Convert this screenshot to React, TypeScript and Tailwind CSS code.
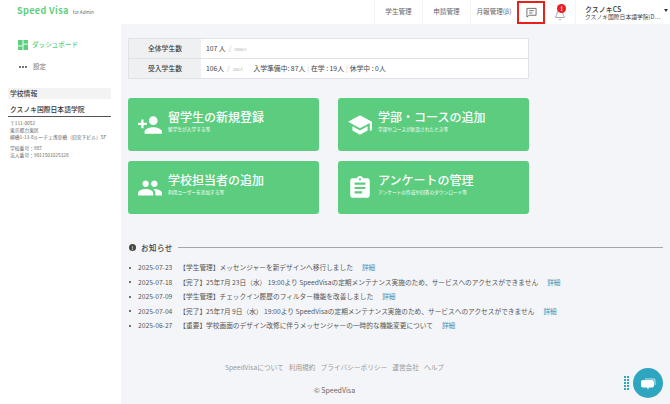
import { Bell } from 'lucide-react'

const cards = [
  { title: '留学生の新規登録', sub: '留学生が入学する等', path: 'M15 12c2.21 0 4-1.79 4-4s-1.79-4-4-4-4 1.79-4 4 1.79 4 4 4zm-9-2V7H4v3H1v2h3v3h2v-3h3v-2H6zm9 4c-2.67 0-8 1.34-8 4v2h16v-2c0-2.66-5.33-4-8-4z' },
  { title: '学部・コースの追加', sub: '学部やコースが新設されたとき等', path: 'M5 13.18v4L12 21l7-3.82v-4L12 17l-7-3.82zM12 3L1 9l11 6 9-4.91V17h2V9L12 3z' },
  { title: '学校担当者の追加', sub: '利用ユーザーを追加する等', path: 'M16 11c1.66 0 2.99-1.34 2.99-3S17.66 5 16 5c-1.66 0-3 1.34-3 3s1.34 3 3 3zm-8 0c1.66 0 2.99-1.34 2.99-3S9.66 5 8 5C6.34 5 5 6.34 5 8s1.34 3 3 3zm0 2c-2.33 0-7 1.17-7 3.5V19h14v-2.5c0-2.33-4.67-3.5-7-3.5zm8 0c-.29 0-.62.02-.97.05 1.16.84 1.97 1.97 1.97 3.45V19h6v-2.5c0-2.33-4.67-3.5-7-3.5z' },
  { title: 'アンケートの管理', sub: 'アンケートの作成や回答のダウンロード等', path: 'M19 3h-4.18C14.4 1.84 13.3 1 12 1c-1.3 0-2.4.84-2.82 2H5c-1.1 0-2 .9-2 2v14c0 1.1.9 2 2 2h14c1.1 0 2-.9 2-2V5c0-1.1-.9-2-2-2zm-7 0c.55 0 1 .45 1 1s-.45 1-1 1-1-.45-1-1 .45-1 1-1zm2 14H7v-2h7v2zm3-4H7v-2h10v2zm0-4H7V7h10v2z' },
]

const notices = [
  { date: '2025-07-23', text: '【学生管理】メッセンジャーを新デザインへ移行しました' },
  { date: '2025-07-18', text: '【完了】25年7月 23日（水） 19:00より SpeedVisaの定期メンテナンス実施のため、サービスへのアクセスができません' },
  { date: '2025-07-09', text: '【学生管理】チェックイン履歴のフィルター機能を改善しました' },
  { date: '2025-07-04', text: '【完了】25年7月 9日（水） 19:00より SpeedVisaの定期メンテナンス実施のため、サービスへのアクセスができません' },
  { date: '2025-06-27', text: '【重要】学校画面のデザイン改修に伴うメッセンジャーの一時的な機能変更について' },
]

export default function App() {
  return (
    <div className="flex h-[404px] w-[670px] flex-col overflow-hidden bg-[#f4f5f8] font-['Noto_Sans_CJK_JP','Noto_Sans',sans-serif] text-[#444]">
      <header className="flex h-[24px] shrink-0 items-center bg-white">
        <div className="mb-[3px] ml-[17px] flex items-baseline gap-[4px]">
          <span className="text-[9px] leading-none font-semibold tracking-[0.4px] text-[#5ccf80]">Speed Visa</span>
          <span className="text-[4.6px] leading-none text-[#666]">for Admin</span>
        </div>
        <nav className="ml-auto flex h-full items-center text-[6.6px] text-[#666]">
          <a className="flex h-full w-[48px] items-center justify-center border-l border-[#f3f3f3]">学生管理</a>
          <a className="flex h-full w-[48px] items-center justify-center border-l border-[#f3f3f3]">申請管理</a>
          <a className="flex h-full w-[47px] items-center justify-center border-l border-[#f3f3f3]">月報管理(β)</a>
          <div className="flex h-[23px] w-[28px] items-center justify-center border-2 border-[#e8201c]">
            <svg width="11" height="11" viewBox="0 0 24 24" fill="none" stroke="#666" strokeWidth="2">
              <path d="M2 3h20v15H7l-5 4z" />
              <path d="M7 8h10M7 13h7" />
            </svg>
          </div>
          <div className="relative flex h-full w-[30px] items-center justify-center">
            <Bell size={12} strokeWidth={1.5} className="mt-[5px] text-[#888]" />
            <span className="absolute top-[4px] left-[12px] flex h-[9px] w-[9px] items-center justify-center rounded-full bg-[#ea1c24] text-[6px] leading-none font-bold text-white">!</span>
          </div>
          <div className="flex h-full w-[95px] items-center border-l border-[#f3f3f3] pl-[9px]">
            <div className="w-[79px] leading-none whitespace-nowrap">
              <div className="text-[7px] leading-[8px] font-medium text-[#333]">クスノキCS</div>
              <div className="text-[5.8px] leading-[7px] text-[#444]">クスノキ国際日本語学院(D⋯</div>
            </div>
            <span className="-mt-[4px] h-0 w-0 border-x-[2.5px] border-t-[3px] border-x-transparent border-t-[#333]" />
          </div>
        </nav>
      </header>

      <div className="flex min-h-0 flex-1">
        <aside className="w-[121px] shrink-0 bg-white">
          <div className="mt-[16px] ml-[18px] flex items-center gap-[4px] text-[6.6px] font-medium text-[#5ccf80]">
            <svg width="10" height="10" viewBox="0 0 11 11" fill="#5ccf80">
              <rect x="0" y="0" width="5" height="6" />
              <rect x="6" y="0" width="5" height="4" />
              <rect x="0" y="7" width="5" height="4" />
              <rect x="6" y="5" width="5" height="6" />
            </svg>
            ダッシュボード
          </div>
          <div className="mt-[12px] ml-[19px] flex items-center gap-[6px] text-[6.6px] text-[#777]">
            <span className="flex gap-[1px]">
              <i className="h-[2px] w-[2px] rounded-full bg-[#444]" />
              <i className="h-[2px] w-[2px] rounded-full bg-[#444]" />
              <i className="h-[2px] w-[2px] rounded-full bg-[#444]" />
            </span>
            設定
          </div>
          <div className="mt-[16px] ml-[8px] w-[103px]">
            <div className="flex h-[11px] items-center bg-[#f3f3f3] pl-[2px] text-[6.8px] font-medium text-[#444]">学校情報</div>
            <div className="mt-[5px] border-b border-[#555] pb-[2px] pl-[2px] text-[6.8px] leading-[10px] font-medium text-[#333]">クスノキ国際日本語学院</div>
            <div className="mt-[2px] pl-[2px] text-[4.8px] leading-[7px] whitespace-nowrap text-[#666]">
              <div>〒111-0052</div>
              <div>東京都台東区</div>
              <div>柳橋1-13-8ルーチェ浅草橋（旧宮下ビル）5F</div>
              <div className="mt-[4px]">学校番号：987</div>
              <div>法人番号：9011501025328</div>
            </div>
          </div>
        </aside>

        <main className="min-w-0 flex-1 pt-[14px] pl-[7px]">
          <div className="w-[401px] border border-[#dfe2e6] bg-white text-[6.8px] text-[#444]">
            <div className="flex h-[20px] border-b border-[#dfe2e6]">
              <div className="flex w-[72px] items-center justify-center bg-[#eef0f2] font-medium">全体学生数</div>
              <div className="flex items-center pl-[5px]">
                107 人<span className="mx-[3px] text-[#bbb]">/</span><span className="text-[4px] text-[#aaa]">5000人</span>
              </div>
            </div>
            <div className="flex h-[19px]">
              <div className="flex w-[72px] items-center justify-center bg-[#eef0f2] font-medium">受入学生数</div>
              <div className="flex items-center pl-[5px]">
                106人<span className="mx-[3px] text-[#bbb]">/</span><span className="text-[4px] text-[#aaa]">200人</span>
                <span className="ml-[10px]">入学準備中: 87人</span>
                <span className="mx-[2px] text-[#ccc]">|</span>在学 : 19人
                <span className="mx-[2px] text-[#ccc]">|</span>休学中 : 0人
              </div>
            </div>
          </div>

          <div className="mt-[19px] grid w-[401px] grid-cols-[191px_191px] gap-x-[19px] gap-y-[10px]">
            {cards.map((card) => (
              <div key={card.title} className="flex h-[53px] items-center rounded-[3px] bg-[#5ccd7f] pl-[9px] text-white">
                <svg width="26" height="26" viewBox="0 0 24 24" fill="#fff" className="shrink-0">
                  <path d={card.path} />
                </svg>
                <div className="-mt-[9px] ml-[5px] whitespace-nowrap">
                  <div className="text-[12px] leading-[15px] font-medium">{card.title}</div>
                  <div className="mt-[2px] text-[4.7px] leading-[6px]">{card.sub}</div>
                </div>
              </div>
            ))}
          </div>

          <div className="mt-[28px] flex w-[535px] items-center">
            <span className="ml-[1px] flex h-[7px] w-[7px] items-center justify-center rounded-full bg-[#444] text-[5px] font-bold text-white">!</span>
            <span className="ml-[5px] text-[7.5px] font-medium tracking-[0.5px] text-[#444]">お知らせ</span>
            <span className="ml-[5px] h-px flex-1 bg-[#a5a7ad]" />
          </div>

          <ul className="mt-[7px] text-[6.7px] leading-[14.5px] whitespace-nowrap text-[#555]">
            {notices.map((notice) => (
              <li key={notice.date} className="flex items-center">
                <span className="ml-[1px] h-[2px] w-[2px] rounded-full bg-[#444]" />
                <span className="ml-[7px]">{notice.date}</span>
                <span className="ml-[7px]">{notice.text}</span>
                <a className="ml-[9px] text-[#3f93b5]">詳細</a>
              </li>
            ))}
          </ul>

          <div className="mt-[29px] w-[413px]">
            <div className="flex justify-center gap-[5px] text-[6.7px] text-[#999]">
              <span>SpeedVisaについて</span>
              <span>利用規約</span>
              <span>プライバシーポリシー</span>
              <span>運営会社</span>
              <span>ヘルプ</span>
            </div>
            <div className="mt-[13px] text-center text-[7px] text-[#666]">© SpeedVisa</div>
          </div>
        </main>
      </div>

      <div className="fixed top-[376px] left-[624px] grid grid-cols-2 gap-[1px]">
        {Array.from({ length: 10 }).map((_, index) => (
          <i key={index} className="h-[2px] w-[2px] bg-[#2fa6c0]" />
        ))}
      </div>
      <div className="fixed top-[368px] left-[633px] flex h-[30px] w-[30px] items-center justify-center rounded-full bg-[#2fa6c0]">
        <svg width="15" height="13" viewBox="0 0 15 13" fill="#fff">
          <path d="M4 1.5h8.5a2 2 0 0 1 2 2V8h-1V3.5a1 1 0 0 0-1-1H4z" opacity="0.75" />
          <path d="M2 3h9a2 2 0 0 1 2 2v3.5a2 2 0 0 1-2 2H8l-1 2-1-2H2a2 2 0 0 1-2-2V5a2 2 0 0 1 2-2z" />
        </svg>
      </div>
    </div>
  )
}
